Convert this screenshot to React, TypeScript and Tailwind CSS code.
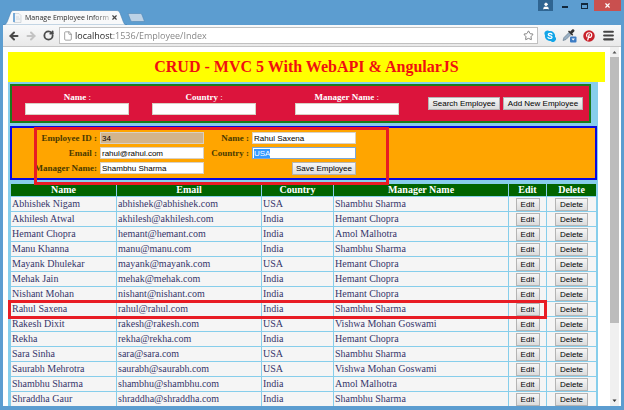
import { useEffect, useRef, useState } from "react";
import { ArrowLeft, ArrowRight, File, Menu, RotateCw, Star, User, X } from "lucide-react";

type Employee = {
  id: number;
  name: string;
  email: string;
  country: string;
  manager: string;
};

const employees: Employee[] = [
  { id: 11, name: "Abhishek Nigam", email: "abhishek@abhishek.com", country: "USA", manager: "Shambhu Sharma" },
  { id: 12, name: "Akhilesh Atwal", email: "akhilesh@akhilesh.com", country: "India", manager: "Hemant Chopra" },
  { id: 13, name: "Hemant Chopra", email: "hemant@hemant.com", country: "India", manager: "Amol Malhotra" },
  { id: 14, name: "Manu Khanna", email: "manu@manu.com", country: "India", manager: "Shambhu Sharma" },
  { id: 15, name: "Mayank Dhulekar", email: "mayank@mayank.com", country: "USA", manager: "Hemant Chopra" },
  { id: 16, name: "Mehak Jain", email: "mehak@mehak.com", country: "India", manager: "Hemant Chopra" },
  { id: 17, name: "Nishant Mohan", email: "nishant@nishant.com", country: "India", manager: "Hemant Chopra" },
  { id: 34, name: "Rahul Saxena", email: "rahul@rahul.com", country: "India", manager: "Shambhu Sharma" },
  { id: 18, name: "Rakesh Dixit", email: "rakesh@rakesh.com", country: "USA", manager: "Vishwa Mohan Goswami" },
  { id: 19, name: "Rekha", email: "rekha@rekha.com", country: "India", manager: "Hemant Chopra" },
  { id: 20, name: "Sara Sinha", email: "sara@sara.com", country: "USA", manager: "Shambhu Sharma" },
  { id: 21, name: "Saurabh Mehrotra", email: "saurabh@saurabh.com", country: "USA", manager: "Vishwa Mohan Goswami" },
  { id: 22, name: "Shambhu Sharma", email: "shambhu@shambhu.com", country: "India", manager: "Amol Malhotra" },
  { id: 23, name: "Shraddha Gaur", email: "shraddha@shraddha.com", country: "India", manager: "Shambhu Sharma" },
];

const buttonClass =
  "h-[13px] border border-[#b4b4b4] bg-linear-to-b from-[#f6f6f6] to-[#dcdcdc] font-['Liberation_Sans',sans-serif] text-[8px] leading-[11px] text-black whitespace-nowrap";

const inputClass =
  "h-[12px] w-[104px] border border-[#d8d0c4] bg-white px-px font-['Liberation_Sans',sans-serif] text-[8px] leading-[10px] text-black outline-none read-only:bg-[#d2b48c] focus:border-[#7aa7d8] selection:bg-[#3399ff] selection:text-white";

function TitleBar() {
  return (
    <header className="flex h-[25px] items-start justify-between">
      <div className="flex items-end self-end">
        <div className="relative flex h-[15px] w-[124px] items-center">
          <svg className="absolute inset-0" width="124" height="15" viewBox="0 0 124 15" aria-hidden="true">
            <path d="M0 15 C3 15 3.500 13 4.500 11 L7.500 3 C8.500 1 9 .5 11 .5 H113 C115 .5 116 1 117 3 L120 11 C121 13 121 15 124 15 Z" fill="#f8f9fa" stroke="#4781b4" strokeWidth=".6" />
          </svg>
          <div className="relative flex w-full items-center pr-[8px] pl-[10px]">
            <svg width="9" height="10" viewBox="0 0 9 10" aria-hidden="true">
              <path d="M1 .5h5l2 2v7H1z" fill="#f2f4f6" stroke="#c6cdd3" strokeWidth=".7" />
              <path d="M1 0v9" stroke="#4a90d0" strokeWidth="1.4" />
              <path d="M3 4h3M3 6h4" stroke="#cbd3da" strokeWidth=".8" />
            </svg>
            <span className="ml-[3px] w-[84px] bg-linear-to-r from-[#222] from-80% to-[#aaa] bg-clip-text font-['Open_Sans',sans-serif] text-[7px] leading-[12px] whitespace-nowrap text-transparent">
              Manage Employee Inform
            </span>
            <button aria-label="Close tab" className="ml-[2px] text-[#444]">
              <X size={7} strokeWidth={4} />
            </button>
          </div>
        </div>
        <button aria-label="New tab" className="mb-[3px]">
          <svg width="18" height="9" viewBox="0 0 18 9">
            <path d="M1 .5h12c1 0 1.500.3 2 1.300L17.500 8.500H5.500c-1 0-1.500-.3-2-1.300z" fill="#bcd2e6" stroke="#5087b5" strokeWidth=".6" />
          </svg>
        </button>
      </div>

      <div className="flex h-[11px] items-stretch">
        <button aria-label="Profile" className="flex w-[15px] items-center justify-center bg-[#2f6592] text-white">
          <User size={8} fill="currentColor" />
        </button>
        <button aria-label="Minimize" className="flex w-[20px] items-center justify-end pt-[2px] pr-[5px]">
          <span className="h-[2px] w-[6px] bg-[#12283c]" />
        </button>
        <button aria-label="Maximize" className="flex w-[16px] items-center justify-end pr-px">
          <span className="h-[6px] w-[7px] border border-t-2 border-[#12283c]" />
        </button>
        <button aria-label="Close" className="ml-[5px] flex w-[27px] items-center justify-center bg-[#c9504f] text-white">
          <X size={7} strokeWidth={4} />
        </button>
      </div>
    </header>
  );
}

function Toolbar() {
  return (
    <nav className="flex h-[22px] items-center border-b border-[#c4c4c4] bg-linear-to-b from-[#f8f9fa] to-[#e9e9e9] pr-[6px] pl-[5px]">
      <button aria-label="Back" className="text-[#4a4a4a]">
        <ArrowLeft size={12} strokeWidth={4} />
      </button>
      <button aria-label="Forward" className="ml-[5px] text-[#c3c3c3]">
        <ArrowRight size={12} strokeWidth={4} />
      </button>
      <button aria-label="Reload" className="ml-[6px] text-[#4a4a4a]">
        <RotateCw size={11} strokeWidth={4} />
      </button>
      <div className="ml-[5px] flex h-[17px] min-w-0 flex-1 items-center border border-[#c0c0c0] bg-white px-[3px]">
        <File size={10} strokeWidth={2} className="text-[#909090]" />
        <input
          aria-label="Address"
          defaultValue="localhost:1536/Employee/Index"
          className="ml-[2px] h-[15px] min-w-0 flex-1 bg-linear-to-r from-[#222] from-[38px] to-[#808080] to-[38px] bg-clip-text font-['Open_Sans',sans-serif] text-[9px] text-transparent outline-none"
        />
        <button aria-label="Bookmark" className="text-[#777]">
          <Star size={11} strokeWidth={2} />
        </button>
      </div>
      <button aria-label="Skype" className="ml-[6px]">
        <svg width="12" height="12" viewBox="0 0 24 24">
          <path d="M7 1a6 6 0 0 0-5 9.500A10 10 0 0 0 13.500 22 6 6 0 0 0 22 13.500 10 10 0 0 0 10.500 2 6 6 0 0 0 7 1z" fill="#12a5e8" />
          <path d="M16 8.500C15 6.500 8.500 6 8.500 9.200c0 3.300 7.500 1.800 7.500 5.300 0 3.300-7 3-8 .3" fill="none" stroke="#fff" strokeWidth="2.600" strokeLinecap="round" />
        </svg>
      </button>
      <button aria-label="Color picker" className="ml-[6px]">
        <svg width="15" height="15" viewBox="0 0 15 15">
          <path d="M1 12.500 2 9.500l5-5 2 2-5 5z" fill="#9ab0c4" stroke="#6b7f91" strokeWidth=".7" />
          <path d="m6 3.500 1-1 1.200 1 2-2c1.300-1 3 .6 2 2l-2 2 1 1.200-1 1z" fill="#333" />
          <rect x="8" y="8.500" width="6.500" height="6" rx="1" fill="#3d7cc4" />
          <path d="m9.500 10.500 1.700 2 1.700-2z" fill="#fff" />
        </svg>
      </button>
      <button aria-label="Pinterest" className="ml-[6px]">
        <svg width="12" height="12" viewBox="0 0 24 24">
          <circle cx="12" cy="12" r="11.500" fill="#c8202a" />
          <path d="M8 13.500C5.500 9 8.500 5.500 12.500 5.500c4 0 5.500 3 4.700 6-.9 3.500-4.200 4.300-5.200 2.300M12.500 9 9.500 20" fill="none" stroke="#fff" strokeWidth="2.400" strokeLinecap="round" />
        </svg>
      </button>
      <button aria-label="Menu" className="ml-[7px] text-[#444]">
        <Menu size={13} strokeWidth={4} />
      </button>
    </nav>
  );
}

function SearchField({ id, label }: { id: string; label: string }) {
  return (
    <div className="flex flex-col items-center">
      <label htmlFor={id} className="text-[9px] leading-[11px] text-white">
        <b>{label}</b> :
      </label>
      <input id={id} className={inputClass} />
    </div>
  );
}

function SearchPanel() {
  return (
    <form
      onSubmit={(e) => e.preventDefault()}
      className="mr-[6px] grid h-[39px] grid-cols-[132fr_124fr_164fr_161fr] items-center border-2 border-[#1b7a1b] bg-[#dc143c]"
    >
      <SearchField id="search-name" label="Name" />
      <SearchField id="search-country" label="Country" />
      <SearchField id="search-manager" label="Manager Name" />
      <div className="flex justify-end gap-[3px] pr-[6px]">
        <button className={`${buttonClass} w-[72px]`}>Search Employee</button>
        <button type="button" className={`${buttonClass} w-[80px]`}>Add New Employee</button>
      </div>
    </form>
  );
}

function EditPanel({ employee }: { employee: Employee }) {
  const countryRef = useRef<HTMLInputElement>(null);

  useEffect(() => {
    countryRef.current?.focus();
    countryRef.current?.select();
  }, [employee]);

  const labelClass = "text-right text-[9px] leading-[12px] font-bold whitespace-nowrap text-[#4a3a00]";

  return (
    <form
      key={employee.id}
      onSubmit={(e) => e.preventDefault()}
      className="relative grid grid-cols-[85px_104px_42px_104px] gap-x-[3px] gap-y-[3px] border-2 border-[#0808e0] bg-[#ffa500] py-[4px]"
    >
      <label htmlFor="emp-id" className={labelClass}>Employee ID :</label>
      <input id="emp-id" readOnly defaultValue={employee.id} className={inputClass} />
      <label htmlFor="emp-name" className={labelClass}>Name :</label>
      <input id="emp-name" defaultValue={employee.name} className={inputClass} />
      <label htmlFor="emp-email" className={labelClass}>Email :</label>
      <input id="emp-email" defaultValue={employee.email} className={inputClass} />
      <label htmlFor="emp-country" className={labelClass}>Country :</label>
      <input id="emp-country" ref={countryRef} defaultValue="USA" className={inputClass} />
      <label htmlFor="emp-manager" className={labelClass}>Manager Name:</label>
      <input id="emp-manager" defaultValue={employee.manager} className={inputClass} />
      <div className="col-span-2 flex h-[12px] justify-end">
        <button className={`${buttonClass} w-[64px]`}>Save Employee</button>
      </div>
      <div className="pointer-events-none absolute -top-px left-[22px] z-10 h-[58px] w-[355px] border-3 border-[#e81c24]" />
    </form>
  );
}

function EmployeeTable({ selectedId, onEdit }: { selectedId: number; onEdit: (e: Employee) => void }) {
  const headClass = "h-[12px] bg-[#006400] p-0 text-center text-[10px] leading-[12px] font-bold text-white";
  const cellClass = "h-[14px] bg-[#f5f5f5] py-0 pr-0 pl-px leading-[14px] whitespace-nowrap";

  return (
    <table className="w-full table-fixed border-separate border-spacing-px text-[10px] text-[#35356b]">
      <colgroup>
        <col className="w-[105px]" />
        <col className="w-[144px]" />
        <col className="w-[71px]" />
        <col />
        <col className="w-[37px]" />
        <col className="w-[49px]" />
      </colgroup>
      <thead>
        <tr>
          <th className={headClass}>Name</th>
          <th className={headClass}>Email</th>
          <th className={headClass}>Country</th>
          <th className={headClass}>Manager Name</th>
          <th className={headClass}>Edit</th>
          <th className={headClass}>Delete</th>
        </tr>
      </thead>
      <tbody>
        {employees.map((e) => (
          <tr key={e.id} className="relative">
            <td className={cellClass}>
              {e.name}
              {e.id === selectedId && (
                <span className="pointer-events-none absolute -top-[2px] right-[49px] -bottom-[3px] -left-[3px] z-10 border-3 border-[#e81c24]" />
              )}
            </td>
            <td className={cellClass}>{e.email}</td>
            <td className={cellClass}>{e.country}</td>
            <td className={cellClass}>{e.manager}</td>
            <td className="bg-[#f5f5f5] p-0">
              <button onClick={() => onEdit(e)} className={`${buttonClass} mx-auto block w-[24px]`}>Edit</button>
            </td>
            <td className="bg-[#f5f5f5] p-0">
              <button className={`${buttonClass} mx-auto block w-[33px]`}>Delete</button>
            </td>
          </tr>
        ))}
      </tbody>
    </table>
  );
}

export default function App() {
  const [selected, setSelected] = useState<Employee>(employees[7]);

  return (
    <div className="flex h-screen flex-col overflow-hidden bg-[#5c9dd0] px-[3px] pb-[4px] font-['Liberation_Serif',serif]">
      <TitleBar />
      <Toolbar />

      <div className="flex min-h-0 flex-1 bg-white">
        <main className="min-w-0 flex-1 overflow-hidden px-[5px] pt-[5px]">
          <h1 className="bg-[#ffff00] text-center text-[16px] leading-[30px] font-bold text-[#f01010]">
            CRUD - MVC 5 With WebAPI &amp; AngularJS
          </h1>
          <div className="mr-[7px] flex flex-col gap-[3px] bg-[#87ceeb] pt-[2px] pr-px pl-[2px]">
            <SearchPanel />
            <EditPanel employee={selected} />
            <EmployeeTable selectedId={selected.id} onEdit={setSelected} />
          </div>
        </main>

        {/* Scrollbar */}
        <div className="mr-[2px] flex w-[9px] flex-col items-center bg-[#f0f0f0]">
          <svg width="9" height="10" viewBox="0 0 9 10" aria-hidden="true">
            <path d="m2.500 6.500 2-2.500 2 2.500z" fill="#555" />
          </svg>
          <div className="h-[266px] w-full bg-[#bcbcbc]" />
          <svg className="mt-auto" width="9" height="10" viewBox="0 0 9 10" aria-hidden="true">
            <path d="m2.500 3.500 2 2.500 2-2.500z" fill="#333" />
          </svg>
        </div>
      </div>
    </div>
  );
}
